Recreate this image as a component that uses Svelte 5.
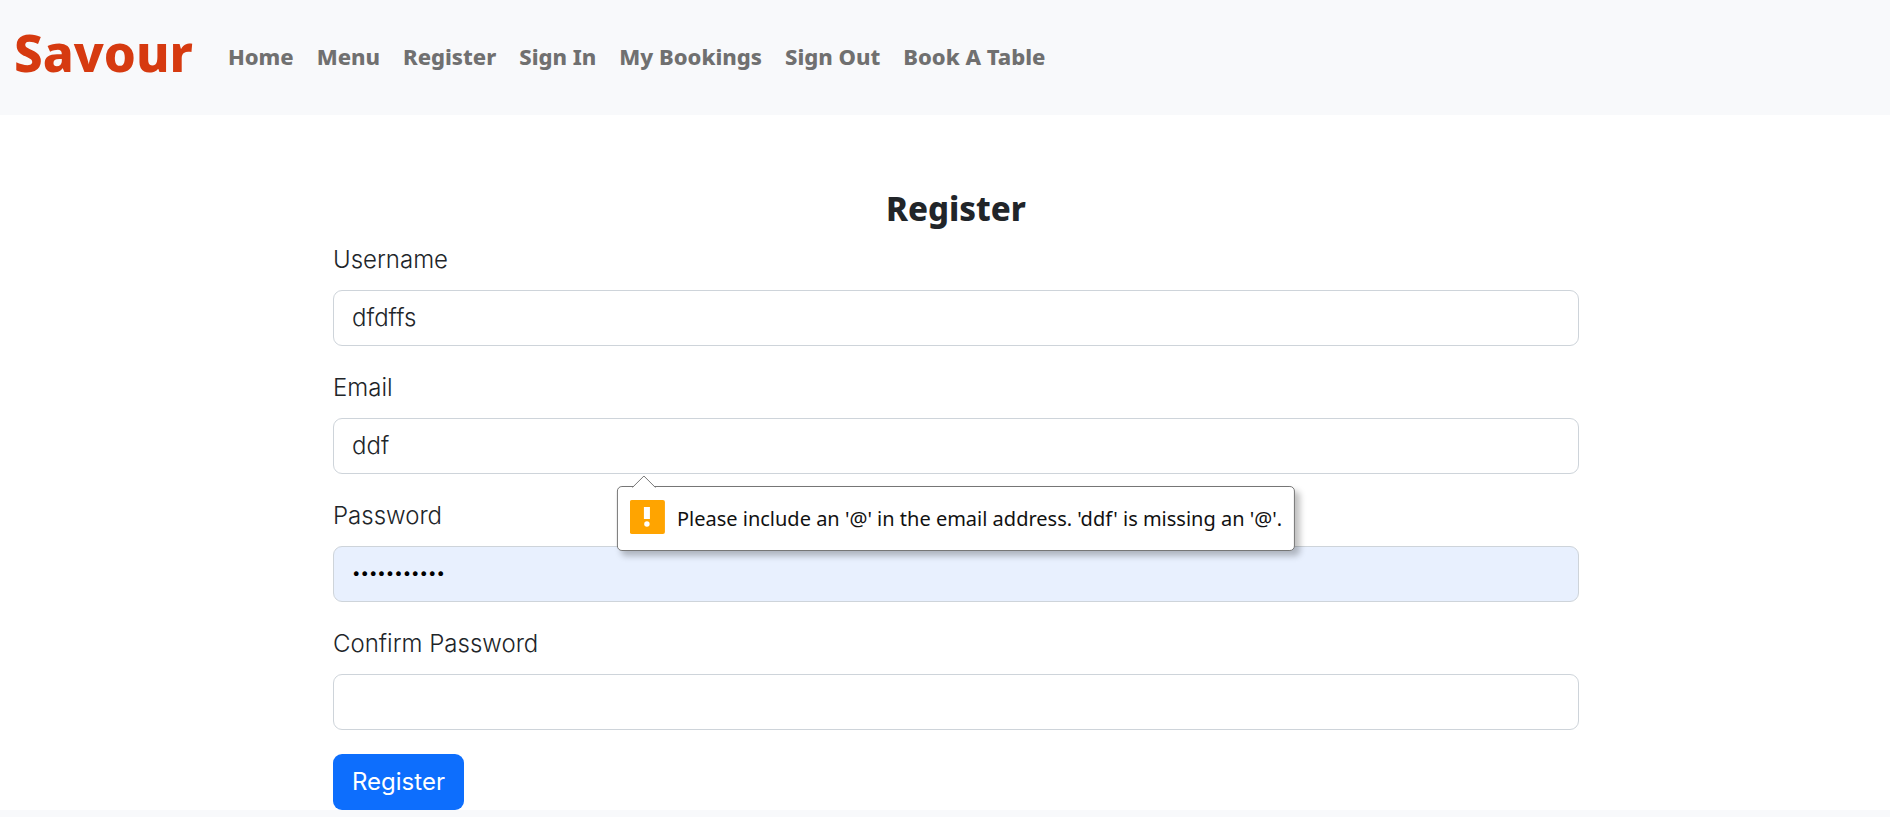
<script>
  const links = ['Home', 'Menu', 'Register', 'Sign In', 'My Bookings', 'Sign Out', 'Book A Table'];
  let username = $state('dfdffs');
  let email = $state('ddf');
  let password = $state('savour12345');
  let confirm = $state('');
</script>

<header class="navbar">
  <a class="brand" href="#home">Savour</a>
  <nav>
    {#each links as link}
      <a class="nav-link" href="#{link.toLowerCase().replaceAll(' ', '-')}">{link}</a>
    {/each}
  </nav>
</header>

<main>
  <form novalidate onsubmit={(e) => e.preventDefault()}>
    <h1>Register</h1>
    <div class="field">
      <label for="username">Username</label>
      <input id="username" type="text" bind:value={username} />
    </div>
    <div class="field">
      <label for="email">Email</label>
      <input id="email" type="email" aria-describedby="email-error" bind:value={email} />
      <div class="bubble" id="email-error" role="alert">
        <svg class="arrow" viewBox="0 0 24 13" aria-hidden="true">
          <path d="M0 13 L0.5 12.5 L12 1 L23.5 12.5 L24 13 Z" fill="#fff" />
          <path d="M0.5 12.5 L12 1 L23.5 12.5" fill="none" stroke="#767676" />
        </svg>
        <svg class="warning" viewBox="0 0 35 34" aria-hidden="true">
          <rect width="35" height="34" rx="2" fill="#ffa400" />
          <rect x="14" y="7" width="6" height="12" fill="#fff" />
          <circle cx="17" cy="24" r="2.7" fill="#fff" />
        </svg>
        <span>Please include an '@' in the email address. 'ddf' is missing an '@'.</span>
      </div>
    </div>
    <div class="field">
      <label for="password">Password</label>
      <input id="password" class="autofilled" type="password" bind:value={password} />
    </div>
    <div class="field">
      <label for="confirm">Confirm Password</label>
      <input id="confirm" type="password" bind:value={confirm} />
    </div>
    <button type="submit">Register</button>
  </form>
</main>
<footer></footer>

<style>
  :global(body) {
    margin: 0;
    color: #212529;
    background: #fff;
    font-family: Inter, sans-serif;
    overflow: hidden;
  }

  .navbar {
    display: flex;
    align-items: center;
    gap: 35px;
    box-sizing: border-box;
    min-height: 115px;
    padding: 0 14px 4px;
    background: #f8f9fb;
    font-family: "Noto Sans", sans-serif;
    font-weight: 800;
  }

  a {
    text-decoration: none;
  }

  .brand {
    padding-bottom: 8px;
    color: #d63a10;
    font-size: 51px;
    line-height: 60px;
  }

  nav {
    display: flex;
    gap: 23px;
  }

  .nav-link {
    color: #707070;
    font-size: 22px;
    line-height: 32px;
  }

  main {
    display: grid;
    grid-template-columns: 333fr 1246fr 311fr;
    padding-top: 72px;
  }

  form {
    grid-column: 2;
  }

  h1 {
    margin: 0 0 12px;
    font-family: "Noto Sans", sans-serif;
    font-size: 33px;
    font-weight: 800;
    line-height: 43px;
    text-align: center;
  }

  .field {
    position: relative;
    margin-bottom: 24px;
  }

  label {
    display: block;
    margin-bottom: 12px;
    font-size: 24px;
    font-weight: 340;
    line-height: 36px;
  }

  input {
    display: block;
    box-sizing: border-box;
    width: 100%;
    height: 56px;
    padding: 8px 18px 10px;
    border: 1px solid #ced4da;
    border-radius: 9px;
    color: #212529;
    background: #fff;
    font: 340 24px/36px Inter, sans-serif;
  }

  .autofilled {
    padding-bottom: 12px;
    color: #000;
    background: #e8f0fe;
    font-size: 15px;
    font-weight: 400;
  }

  .bubble {
    position: absolute;
    z-index: 1;
    top: calc(100% + 12px);
    left: 50%;
    display: flex;
    align-items: center;
    gap: 12px;
    box-sizing: border-box;
    height: 65px;
    padding: 0 12px;
    border: 1px solid #767676;
    border-radius: 5px;
    background: #fff;
    box-shadow: 5px 5px 6px rgb(0 0 0 / 25%);
    color: #111;
    font: 380 20px/32px "Noto Sans", sans-serif;
    white-space: nowrap;
    transform: translateX(-50%);
  }

  .arrow {
    position: absolute;
    bottom: 100%;
    left: 14px;
    width: 24px;
    height: 13px;
    margin-bottom: -1px;
  }

  .warning {
    width: 35px;
    height: 34px;
    margin-bottom: 4px;
  }

  button {
    display: block;
    height: 56px;
    padding: 0 19px;
    border: 0;
    border-radius: 9px;
    color: #fff;
    background: #0d6efd;
    font: 24px/36px Inter, sans-serif;
  }

  footer {
    height: 40px;
    background: #f8f9fb;
  }
</style>
